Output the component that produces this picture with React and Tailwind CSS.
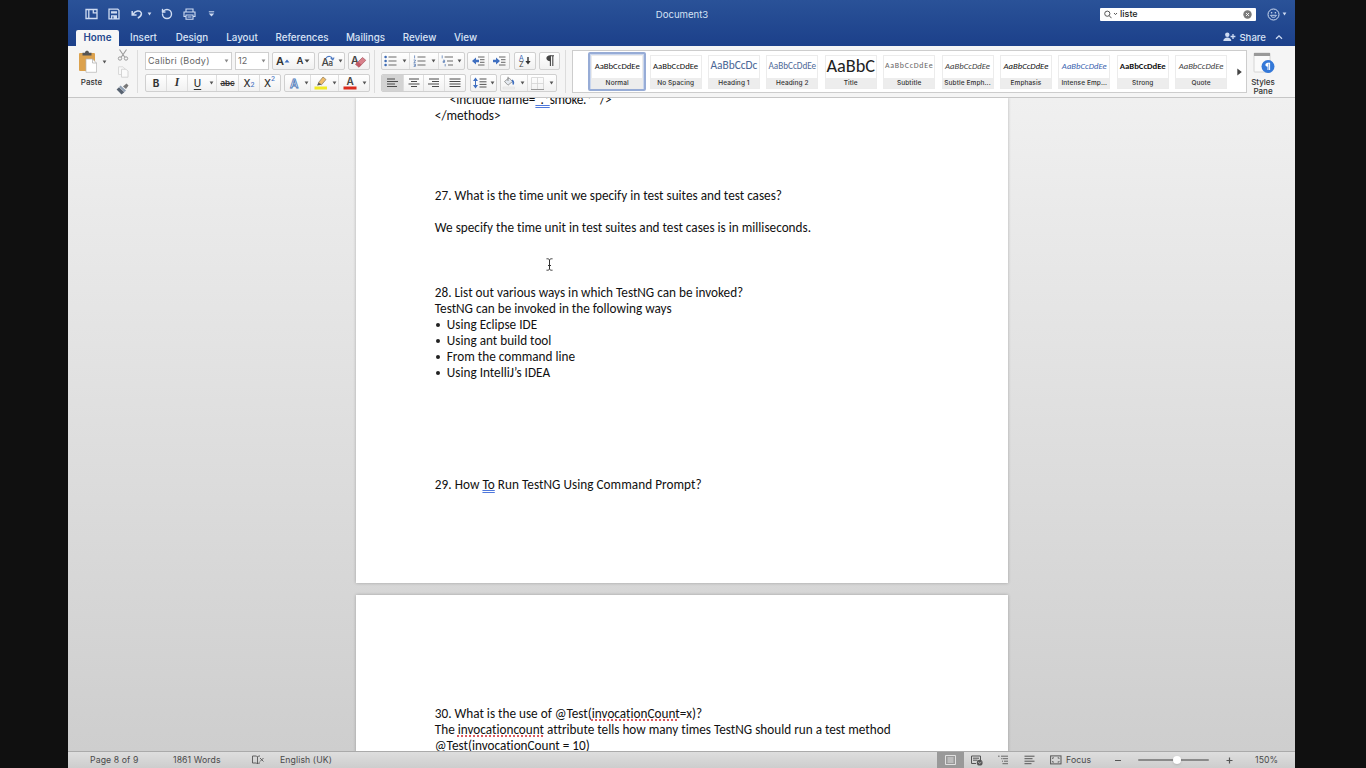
import React from "react";
import { RotateCcw } from "lucide-react";

const Caret = ({ c = "#555" }) => (
  <svg width="5" height="4" viewBox="0 0 5 4" className="shrink-0">
    <path d="M0.6 0.4H4.4L2.5 3.6Z" fill={c} />
  </svg>
);

const Svg = ({ w, h, children, className = "" }) => (
  <svg width={w} height={h} viewBox={`0 0 ${w} ${h}`} fill="none" className={`block shrink-0 ${className}`}>
    {children}
  </svg>
);

const Group = ({ className = "", children }) => (
  <div className={`flex h-[18px] shrink-0 items-stretch overflow-hidden rounded-[2px] border border-[#d0d0d0] bg-linear-to-b from-white to-[#f1f1f1] ${className}`}>
    {children}
  </div>
);

const Cell = ({ className = "", children }) => (
  <div className={`flex items-center justify-center ${className}`}>{children}</div>
);

const Divider = () => <div className="w-px shrink-0 bg-[#dedede]" />;

function TitleBar() {
  return (
    <div className="flex h-7 items-center text-[#d6e2f5]">
      <div className="flex w-[560px] items-center pl-[17px]">
        <Svg w={13} h={12}>
          <path d="M1 1.5H12V10.5H1ZM3.8 1.5V10.5M8.3 1.5V4.8H12" stroke="#cfdcf2" strokeWidth="1.3" />
        </Svg>
        <Svg w={12} h={12} className="ml-[10px]">
          <path d="M1 1.2H9.8L11 2.4V10.8H1Z" stroke="#cfdcf2" strokeWidth="1.3" />
          <path d="M3 3.2H9V5.4H3ZM3 7.2H9V11H3Z" fill="#cfdcf2" />
          <path d="M4.9 8.5V10.6" stroke="#254a90" strokeWidth="1.2" />
        </Svg>
        <Svg w={12} h={12} className="ml-[11px]">
          <path d="M1.2 3V7H5.6M1.8 6.6C4.2 2.4 9 2 10.2 4.8C11.1 7.2 9.2 8.8 6.8 10.2" stroke="#cfdcf2" strokeWidth="1.5" />
        </Svg>
        <div className="ml-[4px]"><Caret c="#cfdcf2" /></div>
        <RotateCcw size={12} strokeWidth={2.8} className="ml-[9px] shrink-0 text-[#cfdcf2]" />
        <Svg w={13} h={12} className="ml-[10px]">
          <path d="M3 4V1H10V4M3 8.5H1V4H12V8.5H10M3 7H10V11.2H3ZM4.5 9H8.5" stroke="#cfdcf2" strokeWidth="1.1" />
        </Svg>
        <Svg w={7} h={6} className="ml-[12px]">
          <path d="M0.8 0.8H6.2" stroke="#cfdcf2" />
          <path d="M0.8 2.4H6.2L3.5 5.6Z" fill="#cfdcf2" />
        </Svg>
      </div>
      <div className="w-28 pr-1 pt-px text-center text-[9.6px] leading-3">Document3</div>
      <div className="ml-auto flex items-center pr-[8px]">
        <div className="flex h-[13px] w-[156px] items-center rounded-[1px] bg-white px-[4px] text-[9px] text-[#222]">
          <Svg w={8} h={9}>
            <circle cx="3.3" cy="3.7" r="2.6" stroke="#555" />
            <path d="M5.2 5.7L7.5 8.2" stroke="#555" />
          </Svg>
          <Svg w={5} h={4} className="ml-px"><path d="M1 1L2.5 2.6L4 1" stroke="#555" /></Svg>
          <span className="ml-[2px] text-[9px] font-medium leading-3">liste</span>
          <Svg w={9} h={9} className="ml-auto">
            <circle cx="4.5" cy="4.5" r="4.2" fill="#7b7b7b" />
            <path d="M3 3L6 6M6 3L3 6" stroke="#fff" strokeWidth="0.9" />
          </Svg>
        </div>
        <Svg w={13} h={13} className="ml-[11px]">
          <circle cx="6.5" cy="6.5" r="5.5" stroke="#cfdcf2" />
          <path d="M3.6 7.3C4.3 10 8.7 10 9.4 7.3Z" stroke="#cfdcf2" strokeWidth="0.9" />
          <circle cx="4.6" cy="4.8" r="0.8" fill="#cfdcf2" />
          <circle cx="8.4" cy="4.8" r="0.8" fill="#cfdcf2" />
        </Svg>
        <div className="ml-[2px]"><Caret c="#cfdcf2" /></div>
      </div>
    </div>
  );
}

const tabs = [
  ["Insert", "w-[49px]"],
  ["Design", "w-12"],
  ["Layout", "w-[52px]"],
  ["References", "w-[68px]"],
  ["Mailings", "w-[59px]"],
  ["Review", "w-[49px]"],
  ["View", "w-[43px]"],
];

function TabBar() {
  return (
    <div className="flex h-[18px] items-end pl-[8px] text-[9.8px] font-medium text-[#d9e4f6]">
      <div className="flex h-4 w-[43px] items-center justify-center rounded-t-[2px] bg-[#f6f6f6] font-semibold text-[#24488d]">Home</div>
      {tabs.map(([t, w]) => (
        <div key={t} className={`flex h-4 items-center justify-center ${w}`}>{t}</div>
      ))}
      <div className="ml-auto flex h-[18px] items-center pr-[12px]">
        <Svg w={13} h={10}>
          <circle cx="4.3" cy="2.7" r="2.2" fill="#cfdcf2" />
          <path d="M0.3 9C0.3 4.2 8.3 4.2 8.3 9Z" fill="#cfdcf2" />
          <path d="M10 2V7M7.6 4.5H12.4" stroke="#cfdcf2" strokeWidth="1.3" />
        </Svg>
        <span className="ml-[3px] pt-px text-[9.6px] leading-3">Share</span>
        <Svg w={8} h={6} className="ml-[9px]"><path d="M1 4.8L4 1.8L7 4.8" stroke="#cfdcf2" strokeWidth="1.3" /></Svg>
      </div>
    </div>
  );
}

const Lines = ({ rows, w = 12 }) => (
  <Svg w={w} h={10}>
    {rows.map(([a, b], i) => (
      <path key={i} d={`M${a} ${1 + i * 2.5}H${b}`} stroke="#4a4a4a" strokeWidth="1.1" />
    ))}
  </Svg>
);

const ListIcon = ({ kind }) => (
  <Svg w={13} h={12}>
    {kind === "bullet" && [2, 6, 10].map((y) => <circle key={y} cx="1.6" cy={y} r="1.3" fill="#3f6cb5" />)}
    {kind === "number" && <path d="M1.6 0.4V3.4M0.6 5H2.4V6L0.8 7.4H2.6M0.6 9H2.4V11.4H0.6M1 10.2H2.4" stroke="#5b7db5" strokeWidth="0.8" />}
    {kind === "multi" && <path d="M1.2 0.4V3.4M2 5.2H3.6V7.4H2V6.4H3.6M4.2 9V11.4" stroke="#5b7db5" strokeWidth="0.8" />}
    <path d={kind === "multi" ? "M3.6 2H12M6 6H12M7 10H12" : "M4.5 2H12.5M4.5 6H12.5M4.5 10H12.5"} stroke="#6a6a6a" strokeWidth="1.1" />
  </Svg>
);

const Indent = ({ right }) => (
  <Svg w={13} h={10}>
    <path d="M6 1H12.5M8 3.7H12.5M8 6.3H12.5M6 9H12.5" stroke="#666" />
    <path d={right ? "M0 3.8H3V1.5L7 5L3 8.5V6.2H0Z" : "M7 3.8H4V1.5L0 5L4 8.5V6.2H7Z"} fill="#3f6fc0" />
  </Svg>
);

function Clipboard() {
  return (
    <div className="flex w-[69px] shrink-0">
      <div className="flex w-[44px] flex-col items-center pt-[4px]">
        <div className="flex items-center pl-[5px]">
          <Svg w={20} h={23}>
            <rect x="1" y="3" width="16" height="18" rx="1" fill="#dca24e" />
            <path d="M4.5 5.5V2.8H7C7.2 0.2 10.8 0.2 11 2.8H13.5V5.5Z" fill="#555" />
            <path d="M8 9H14.5L18.5 13V22.3H8Z" fill="#fff" stroke="#b5b5b5" strokeWidth="0.7" />
            <path d="M14.5 9V13H18.5" stroke="#aaa" strokeWidth="0.7" />
          </Svg>
          <div className="ml-[4px]"><Caret /></div>
        </div>
        <div className="mt-[4px] pl-[3px] text-[8px] font-medium leading-[10px] text-[#333]">Paste</div>
      </div>
      <div className="flex flex-col items-center pl-[4px] pt-[3px]">
        <Svg w={12} h={12}>
          <path d="M2.5 0.5L7.8 8.2M9.5 0.5L4.2 8.2" stroke="#9b9b9b" strokeWidth="1.1" />
          <circle cx="3" cy="9.5" r="1.7" stroke="#9b9b9b" /><circle cx="9" cy="9.5" r="1.7" stroke="#9b9b9b" />
        </Svg>
        <Svg w={12} h={12} className="mt-[5px]">
          <path d="M1.5 0.8H6L8 3V8.5H1.5Z" fill="#f8f8f8" stroke="#dadada" />
          <path d="M4.5 3.2H9L11 5.2V11.2H4.5Z" fill="#fafafa" stroke="#d4d4d4" />
        </Svg>
        <Svg w={13} h={12} className="mt-[5px]">
          <path d="M7 3.5L10.5 0.5L12.5 2.5L10 6Z" fill="#777" />
          <path d="M4.5 2.5L10 7.5L8.5 9L3.2 4Z" fill="#8f9fb3" />
          <path d="M3 4.2L8.3 9.2L5.5 11.6L0.6 6.5Z" fill="#586371" />
        </Svg>
      </div>
    </div>
  );
}

const Caret2 = () => <Cell className="w-[7px]"><Caret /></Cell>;

function FontTools() {
  return (
    <div className="flex w-[225px] shrink-0 flex-col pt-[6px]">
      <div className="flex">
        <div className="flex h-[18px] w-[87px] items-center justify-between border border-[#cfcfcf] bg-white px-[2px] text-[9px] text-[#666]">
          <span className="tracking-[0.25px]">Calibri (Body)</span><Caret c="#888" />
        </div>
        <div className="ml-[3px] flex h-[18px] w-[34px] items-center justify-between border border-[#cfcfcf] bg-white px-[2px] text-[9px] text-[#666]">
          <span>12</span><Caret c="#888" />
        </div>
        <Group className="ml-[3px] w-[43px] text-[#333]">
          <Cell className="w-[20px] text-[11px] font-semibold">A<Svg w={6} h={4} className="mb-px"><path d="M0.5 3.5L3 0.5L5.5 3.5Z" fill="#3f6fc0" /></Svg></Cell>
          <Cell className="w-[21px] text-[9.5px] font-semibold">A<Svg w={6} h={4} className="ml-px"><path d="M0.5 0.5L3 3.5L5.5 0.5Z" fill="#444" /></Svg></Cell>
        </Group>
        <Group className="ml-[3px] w-[27px]">
          <Cell className="w-[18px]">
            <Svg w={14} h={13}>
              <text x="0.5" y="11" fontSize="10.5" fontFamily="Inter" fontWeight="500" fill="#444">A</text>
              <text x="7.5" y="11" fontSize="8" fontFamily="Inter" fontWeight="500" fill="#444">a</text>
              <path d="M5 3C7 0.5 11 0.8 11.6 4.5M9.7 3.2L11.8 5L13.1 2.6" stroke="#4b78c2" strokeWidth="1.1" />
            </Svg>
          </Cell>
          <Caret2 />
        </Group>
        <Group className="ml-[3px] w-[22px]">
          <Cell className="w-full">
            <Svg w={16} h={15}>
              <text x="0" y="9.5" fontSize="10.5" fontFamily="Inter" fontWeight="600" fill="#444">A</text>
              <path d="M4.5 10.3L11.5 3.5L14.8 6.3L8 13.2Z" fill="#d8808a" stroke="#a5555f" strokeWidth="0.7" />
              <path d="M4.5 10.3L7 7.8L10.4 10.8L8 13.2Z" fill="#c05a67" />
            </Svg>
          </Cell>
        </Group>
      </div>
      <div className="mt-[4px] flex">
        <Group className="w-[136px] text-[10px] text-[#333]">
          <Cell className="w-[20px] font-bold">B</Cell><Divider />
          <Cell className="w-[20px] font-['Liberation_Serif'] text-[11.5px] font-bold italic">I</Cell><Divider />
          <Cell className="w-[19px] font-medium underline underline-offset-2">U</Cell>
          <Cell className="w-[9px]"><Caret /></Cell><Divider />
          <Cell className="w-[21px] text-[8px] font-semibold line-through">abc</Cell><Divider />
          <Cell className="w-[20px] font-medium">X<span className="mt-[6px] text-[6.5px] text-[#3f6fc0]">2</span></Cell><Divider />
          <Cell className="w-[19px] font-medium">X<span className="mb-[6px] text-[6.5px] text-[#3f6fc0]">2</span></Cell>
        </Group>
        <Group className="ml-[3px] w-[86px]">
          <Cell className="w-[18px]">
            <Svg w={13} h={13}><text x="2" y="10.5" fontSize="11.5" fontFamily="Inter" fontWeight="600" fill="#f4f8fd" stroke="#4b78b8" strokeWidth="0.8">A</text></Svg>
          </Cell>
          <Caret2 /><Divider />
          <Cell className="w-[20px]">
            <Svg w={14} h={14}>
              <path d="M4.5 6.5L9 1L12 3.5L7.5 8.8Z" fill="#f1bd68" stroke="#8a7a5c" strokeWidth="0.7" />
              <path d="M4.5 6.5L7.5 8.8L3 9.5Z" fill="#555" />
              <path d="M0.5 10.4H13V13.4H0.5Z" fill="#f2ea22" />
            </Svg>
          </Cell>
          <Caret2 /><Divider />
          <Cell className="w-[21px]">
            <Svg w={14} h={14}>
              <text x="3.4" y="8.9" fontSize="10" fontFamily="Inter" fontWeight="600" fill="#444">A</text>
              <path d="M0.5 10.4H13.5V13.4H0.5Z" fill="#dc2b1c" />
            </Svg>
          </Cell>
          <Cell className="w-[8px]"><Caret /></Cell>
        </Group>
      </div>
    </div>
  );
}

function ParagraphTools() {
  return (
    <div className="flex w-[179px] shrink-0 flex-col pt-[6px]">
      <div className="flex">
        <Group className="w-[84px]">
          <Cell className="w-[17px]"><ListIcon kind="bullet" /></Cell><Cell className="w-[10px]"><Caret /></Cell><Divider />
          <Cell className="w-[18px]"><ListIcon kind="number" /></Cell><Cell className="w-[10px]"><Caret /></Cell><Divider />
          <Cell className="w-[16px]"><ListIcon kind="multi" /></Cell><Cell className="w-[8px]"><Caret /></Cell>
        </Group>
        <Group className="ml-[2px] w-[43px]">
          <Cell className="w-[20px]"><Indent /></Cell><Divider /><Cell className="w-[20px]"><Indent right /></Cell>
        </Group>
        <Group className="ml-[4px] w-[22px]">
          <Cell className="w-full">
            <Svg w={14} h={14}>
              <text x="0.8" y="6.6" fontSize="7.5" fontFamily="Inter" fill="#3f6cb5">A</text>
              <text x="1" y="13.2" fontSize="7.5" fontFamily="Inter" fill="#444">Z</text>
              <path d="M10 3V9" stroke="#333" strokeWidth="1.4" /><path d="M7.4 7H12.6L10 10.6Z" fill="#333" />
            </Svg>
          </Cell>
        </Group>
        <Group className="ml-[3px] w-[21px]">
          <Cell className="w-full">
            <Svg w={10} h={12}>
              <path d="M5 0.8H9M5.4 0.8V11M7.8 0.8V11" stroke="#444" strokeWidth="1.1" />
              <path d="M5.5 0.3C0 0.2 0 6.3 5.5 6.2Z" fill="#444" />
            </Svg>
          </Cell>
        </Group>
      </div>
      <div className="mt-[4px] flex">
        <Group className="w-[85px]">
          <Cell className="w-[21px] bg-[#d3d3d3]"><Lines rows={[[1, 9], [1, 12], [1, 9], [1, 11]]} /></Cell><Divider />
          <Cell className="w-[20px]"><Lines rows={[[1, 11], [3, 9], [0.5, 11.5], [3, 9]]} /></Cell><Divider />
          <Cell className="w-[20px]"><Lines rows={[[1, 11], [4, 11], [0, 11], [4, 11]]} /></Cell><Divider />
          <Cell className="w-[20px]"><Lines rows={[[0.5, 11.5], [0.5, 11.5], [0.5, 11.5], [0.5, 11.5]]} /></Cell>
        </Group>
        <Group className="ml-[4px] w-[27px]">
          <Cell className="w-[17px]">
            <Svg w={14} h={12}>
              <path d="M2.5 2.5V9.5" stroke="#3f6fc0" /><path d="M0 4L2.5 0.5L5 4ZM0 8L2.5 11.5L5 8Z" fill="#3f6fc0" />
              <path d="M6.5 2H13.5M6.5 4.8H13.5M6.5 7.4H13.5M6.5 10H13.5" stroke="#555" />
            </Svg>
          </Cell>
          <Cell className="w-[8px]"><Caret /></Cell>
        </Group>
        <Group className="ml-[3px] w-[57px]">
          <Cell className="w-[16px]">
            <Svg w={14} h={14}>
              <path d="M2.5 5.5L7 1.8L10.5 5.5L6 9.2Z" fill="#e4e9ef" stroke="#888" strokeWidth="0.8" />
              <path d="M6 0.8V5" stroke="#777" strokeWidth="0.8" />
              <path d="M10.4 3.5C13 5 12.4 8.4 11 9C10.2 8.5 10.8 6 9.6 4.5Z" fill="#3f6fc0" />
              <path d="M1 11H12.5V13H1Z" fill="#eee" stroke="#ddd" strokeWidth="0.5" />
            </Svg>
          </Cell>
          <Cell className="w-[10px]"><Caret /></Cell><Divider />
          <Cell className="w-[18px]">
            <Svg w={13} h={13}>
              <path d="M0.5 0.5H12.5V12.5H0.5ZM6.5 0.5V12.5M0.5 6.5H12.5" stroke="#d3d3d3" strokeWidth="0.8" />
              <path d="M0 12.5H13" stroke="#999" />
            </Svg>
          </Cell>
          <Cell className="w-[10px]"><Caret /></Cell>
        </Group>
      </div>
    </div>
  );
}

const styleCards = [
  ["AaBbCcDdEe", "Normal", "text-[8.7px] font-medium text-[#111]"],
  ["AaBbCcDdEe", "No Spacing", "text-[8.7px] font-medium text-[#111]"],
  ["AaBbCcDc", "Heading 1", "text-[11.4px] text-[#4a6695]"],
  ["AaBbCcDdEe", "Heading 2", "text-[9.2px] text-[#4f6a98]"],
  ["AaBbC", "Title", "text-[18.3px] text-[#222]"],
  ["AaBbCcDdEe", "Subtitle", "text-[7.9px] tracking-[0.75px] text-[#666]"],
  ["AaBbCcDdEe", "Subtle Emph...", "text-[8.7px] italic text-[#444]"],
  ["AaBbCcDdEe", "Emphasis", "text-[8.7px] italic text-[#111]"],
  ["AaBbCcDdEe", "Intense Emp...", "text-[8.7px] italic text-[#3d66b0]"],
  ["AaBbCcDdEe", "Strong", "text-[8.7px] font-bold text-[#111]"],
  ["AaBbCcDdEe", "Quote", "text-[8.7px] italic text-[#444]"],
];

function StylesGallery() {
  return (
    <div className="mt-[4px] flex h-[43px] w-[675px] shrink-0 border border-[#cdcdcd] bg-white pl-[15px]">
      {styleCards.map(([sample, name, cls], i) => (
        <div
          key={name}
          className={`mt-px flex h-[39px] w-[58.4px] shrink-0 items-center justify-center rounded-[2px] ${i === 0 ? "border-2 border-[#97acd6] bg-[#c9d6ee]" : ""}`}
        >
          <div className="flex h-[34px] w-[52px] shrink-0 flex-col border border-[#ececec] bg-white">
            <div className={`flex h-[22px] items-center justify-center whitespace-nowrap pb-px font-['Carlito','Lato',sans-serif] leading-none ${cls}`}>{sample}</div>
            <div className="flex h-[10px] items-center justify-center whitespace-nowrap bg-[#ededed] pt-[2px] text-[6.5px] font-medium tracking-[0.1px] text-[#333]">{name}</div>
          </div>
        </div>
      ))}
      <div className="flex flex-1 items-center justify-center pl-[2px]">
        <Svg w={5} h={8}><path d="M0.3 0.5L4.8 4L0.3 7.5Z" fill="#444" /></Svg>
      </div>
    </div>
  );
}

function Ribbon() {
  return (
    <div className="flex h-[52px] border-b border-[#c6c6c6] bg-[#f5f5f5]">
      <Clipboard />
      <div className="mr-[7px] mt-[4px] h-[43px] w-px bg-[#dcdcdc]" />
      <FontTools />
      <div className="ml-[4px] mr-[6px] mt-[4px] h-[43px] w-px bg-[#dcdcdc]" />
      <ParagraphTools />
      <div className="ml-[5px] mr-[6px] mt-[4px] h-[43px] w-px bg-[#dcdcdc]" />
      <StylesGallery />
      <div className="ml-px flex w-[30px] flex-col items-center pt-[6px]">
        <Svg w={24} h={23}>
          <rect x="3" y="1" width="16" height="19" rx="0.8" fill="#fafafa" stroke="#ccc" strokeWidth="0.8" />
          <path d="M3 1H19V4H3Z" fill="#999" />
          <circle cx="17" cy="14.5" r="6.5" fill="#3478d8" />
          <path d="M16.8 11.2H19M17 11V18M18.6 11V18" stroke="#fff" />
          <path d="M17 10.8C13.5 10.8 13.5 14.8 17 14.8Z" fill="#fff" />
        </Svg>
        <div className="mt-[3px] text-center text-[8px] font-medium leading-[9px] text-[#333]">Styles<br />Pane</div>
      </div>
    </div>
  );
}

const Row = ({ children, className = "" }) => (
  <div className={`h-[16.09px] whitespace-pre ${className}`}>{children}</div>
);

const Bullet = ({ children }) => (
  <Row className="flex">
    <span className="flex w-3 items-center pl-[1.5px]"><span className="h-1 w-1 rounded-full bg-[#222]" /></span>
    {children}
  </Row>
);

const Wrong = ({ children }) => (
  <span className="underline decoration-[#dc5a5e] decoration-dotted decoration-[1.5px] underline-offset-[2px] [text-decoration-skip-ink:none]">{children}</span>
);

const Grammar = ({ children }) => (
  <span className="underline decoration-[#4f78dc] decoration-double decoration-1 underline-offset-[1px] [text-decoration-skip-ink:none]">{children}</span>
);

function DocumentArea() {
  return (
    <div className="relative flex h-[653px] flex-col items-center overflow-hidden bg-linear-to-b from-[#f0f0f0] to-[#cecece] font-['Carlito','Lato',sans-serif] text-[13.22px] leading-[16.09px] text-[#111] [font-variant-ligatures:none]">
      <div className="h-[485px] w-[652px] shrink-0 overflow-hidden bg-white pl-[79.3px] shadow-[0_0_3px_rgba(0,0,0,0.25)]">
        <div className="-mt-[6.4px]">
          <Row>{"     <include name="}<span className="tracking-[-0.3px]"><Grammar>{"\".*"}</Grammar>{"smoke.*\" />"}</span></Row>
          <Row>{"</methods>"}</Row>
          <Row /><Row /><Row /><Row />
          <Row>27. What is the time unit we specify in test suites and test cases?</Row>
          <Row />
          <Row>We specify the time unit in test suites and test cases is in milliseconds.</Row>
          <Row /><Row /><Row />
          <Row>28. List out various ways in which TestNG can be invoked?</Row>
          <Row>TestNG can be invoked in the following ways</Row>
          <Bullet>Using Eclipse IDE</Bullet>
          <Bullet>Using ant build tool</Bullet>
          <Bullet>From the command line</Bullet>
          <Bullet>Using IntelliJ’s IDEA</Bullet>
          <Row /><Row /><Row /><Row /><Row /><Row />
          <Row className="tracking-[0.04px]">29. How <Grammar>To</Grammar> Run TestNG Using Command Prompt?</Row>
        </div>
      </div>
      <div className="mt-3 h-40 w-[652px] shrink-0 bg-white pl-[79.3px] pt-[110.6px] shadow-[0_0_3px_rgba(0,0,0,0.25)]">
        <Row>30. What is the use of @Test(<Wrong>invocationCount</Wrong>=x)?</Row>
        <Row>The <Wrong>invocationcount</Wrong> attribute tells how many times TestNG should run a test method</Row>
        <Row>@Test(invocationCount = 10)</Row>
      </div>
      <svg width="7" height="13" viewBox="0 0 7 13" fill="none" className="absolute left-[478px] top-[160px]">
        <path d="M0.5 0.8C2 0.6 3.5 1 3.5 2.4C3.5 1 5 0.6 6.5 0.8M3.5 2V11M0.5 12.2C2 12.4 3.5 12 3.5 10.6C3.5 12 5 12.4 6.5 12.2M2 7.5H5" stroke="#333" />
      </svg>
    </div>
  );
}

function StatusBar() {
  return (
    <div className="flex h-[17px] items-center border-t border-[#aaa] bg-linear-to-b from-[#dedede] to-[#cdcdcd] text-[8.7px] leading-[11px] tracking-[0.1px] text-[#4a4a4a]">
      <span className="ml-[22px] w-[83px] pt-px">Page 8 of 9</span>
      <span className="w-[79px] pt-px">1861 Words</span>
      <Svg w={12} h={10} className="mr-[16px]">
        <path d="M0.5 1H4.5L5.5 2L6.5 1H8M0.5 1V8H4.5L5.5 9L6.5 8H8M5.5 2V9M8 3L11.5 6.5M11.5 3L8 6.5" stroke="#555" strokeWidth="0.9" />
      </Svg>
      <span className="pt-px">English (UK)</span>
      <div className="ml-auto flex h-full items-center">
        <div className="flex h-full w-[27px] items-center justify-center bg-[#999]">
          <Svg w={11} h={10}><path d="M0.5 0.5H10.5V9.5H0.5ZM2.5 3H8.5M2.5 5H8.5M2.5 7H8.5" stroke="#e8e8e8" strokeWidth="0.9" /></Svg>
        </div>
        <Svg w={13} h={11} className="ml-[7px]">
          <path d="M0.5 1H9.5V6M0.5 1V8.5H5M2 3.2H8M2 5.2H6.5" stroke="#555" />
          <circle cx="8.7" cy="7.7" r="2.9" fill="#555" /><path d="M7 7L9 8.5L10.3 6.7" stroke="#ccc" strokeWidth="0.7" />
        </Svg>
        <Svg w={11} h={10} className="ml-[14px]">
          <path d="M0 1.2H1.6M3 1.2H10M4.5 3.7H10M6 6.2H10M4.5 8.7H10M3 3.7H3.8M4 6.2H5" stroke="#666" />
        </Svg>
        <Svg w={11} h={10} className="ml-[15px]">
          <path d="M0.5 1.2H10.5M0.5 3.7H8.5M0.5 6.2H10.5M0.5 8.7H7.5" stroke="#555" />
        </Svg>
        <Svg w={12} h={10} className="ml-[15px]">
          <rect x="0.6" y="0.9" width="10.4" height="8" stroke="#555" />
          <path d="M2.6 4V2.8H4M7.6 2.8H9V4M9 6V7.1H7.6M4 7.1H2.6V6" stroke="#555" strokeWidth="0.8" />
        </Svg>
        <span className="ml-[4px] w-[49px] pt-px">Focus</span>
        <span className="h-px w-[6px] bg-[#555]" />
        <div className="relative ml-[17px] h-[2px] w-[71px] rounded-full bg-[#8a8a8a]">
          <span className="absolute left-[35px] -top-[3px] h-2 w-2 rounded-full bg-white shadow-sm" />
        </div>
        <Svg w={7} h={7} className="ml-[17px]"><path d="M0.5 3.5H6.5M3.5 0.5V6.5" stroke="#555" strokeWidth="1.2" /></Svg>
        <span className="ml-[22px] w-[40px] pt-px">150%</span>
      </div>
    </div>
  );
}

export default function App() {
  return (
    <div className="flex h-[768px] w-[1366px] justify-center overflow-hidden bg-[#101010] pr-[3px] font-['Inter',sans-serif]">
      <div className="flex h-full w-[1227px] flex-col overflow-hidden">
        <div className="bg-linear-to-b from-[#2a5298] to-[#1c408a]">
          <TitleBar />
          <TabBar />
        </div>
        <Ribbon />
        <DocumentArea />
        <StatusBar />
      </div>
    </div>
  );
}
